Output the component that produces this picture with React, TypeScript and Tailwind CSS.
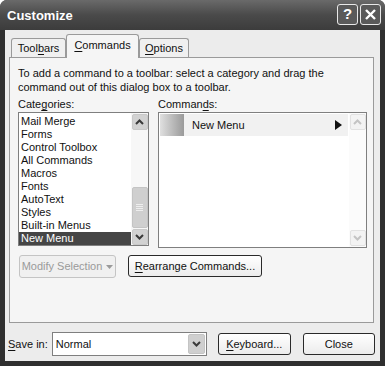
import React from "react";

const font = { fontFamily: '"Liberation Sans", Arial, sans-serif' };

function U({ children }: { children: React.ReactNode }) {
  return <span className="underline underline-offset-[2px]">{children}</span>;
}

function ArrowBtn({ dir, disabled }: { dir: "up" | "down"; disabled?: boolean }) {
  return (
    <div
      className={`w-[16px] h-[16px] rounded-[2px] border flex items-center justify-center ${
        disabled ? "border-[#e2e2e2] bg-[#f3f3f3]" : "border-[#c9c9c9] bg-[#d2d2d2]"
      }`}
    >
      <svg width="9" height="6" viewBox="0 0 9 6">
        <path
          d={dir === "up" ? "M1 5 L4.5 1.5 L8 5" : "M1 1 L4.5 4.5 L8 1"}
          fill="none"
          stroke={disabled ? "#c4c4c4" : "#3a3a3a"}
          strokeWidth="2"
        />
      </svg>
    </div>
  );
}

const categories = [
  "Mail Merge",
  "Forms",
  "Control Toolbox",
  "All Commands",
  "Macros",
  "Fonts",
  "AutoText",
  "Styles",
  "Built-in Menus",
  "New Menu",
];

export default function App() {
  return (
    <div
      className="w-[385px] h-[366px] bg-[#2f2f2f] rounded-t-[7px] flex flex-col text-[11px] text-[#111]"
      style={font}
    >
      {/* title bar */}
      <div className="h-[30px] shrink-0 flex items-center justify-between pl-[7px] pr-[4px] rounded-t-[7px] bg-gradient-to-b from-[#6a6a6a] via-[#4a4a4a] to-[#3c3c3c]">
        <span className="text-white font-bold text-[13px] mt-[2px]">Customize</span>
        <div className="flex gap-[2px] mt-[-1px]">
          <div className="w-[21px] h-[21px] rounded-[3px] border border-[#e8e8e8] bg-[#5a5a5a] flex items-center justify-center text-white font-bold text-[15px]">
            ?
          </div>
          <div className="w-[21px] h-[21px] rounded-[3px] border border-[#e8e8e8] bg-[#5a5a5a] flex items-center justify-center">
            <svg width="13" height="13" viewBox="0 0 13 13">
              <path d="M2 2 L11 11 M11 2 L2 11" stroke="#fff" strokeWidth="2.4" />
            </svg>
          </div>
        </div>
      </div>

      {/* body */}
      <div className="flex-1 mx-[5px] mb-[5px] bg-[#ececec] flex flex-col pl-[4px] pr-[6px] pt-[4px]">
        {/* tabs */}
        <div className="flex items-end h-[23px] pl-[2px] relative z-10">
          <div className="h-[19px] w-[55px] border border-b-0 border-[#9a9a9a] rounded-t-[3px] bg-[#f0f0f0] flex items-center justify-center">
            Tool<U>b</U>ars
          </div>
          <div className="h-[24px] w-[73px] mb-[-1px] border border-b-0 border-[#9a9a9a] rounded-t-[3px] bg-[#f5f5f5] flex items-center justify-center pb-[2px]">
            <U>C</U>ommands
          </div>
          <div className="h-[19px] w-[50px] border border-b-0 border-[#9a9a9a] rounded-t-[3px] bg-[#f0f0f0] flex items-center justify-center">
            <U>O</U>ptions
          </div>
        </div>

        {/* panel */}
        <div className="h-[266px] border border-[#9a9a9a] bg-[#f5f5f5] pl-[8px] pr-[6px] pt-[8px]">
          <p className="leading-[14px]">
            To add a command to a toolbar: select a category and drag the
            <br />
            command out of this dialog box to a toolbar.
          </p>

          <div className="flex gap-[9px] mt-[2px]">
            {/* categories */}
            <div className="w-[131px] flex flex-col">
              <div className="h-[16px] leading-[16px]">
                Cate<U>g</U>ories:
              </div>
              <div className="h-[134px] border border-[#7f7f7f] bg-white flex">
                <div className="flex-1 flex flex-col pt-[2px]">
                  {categories.map((c, i) => (
                    <div
                      key={c}
                      className={`h-[13px] leading-[13px] pl-[2px] ${
                        i === categories.length - 1 ? "bg-[#454545] text-white" : ""
                      }`}
                    >
                      {c}
                    </div>
                  ))}
                </div>
                <div className="w-[17px] flex flex-col bg-[#f7f7f7] p-[0.5px]">
                  <ArrowBtn dir="up" />
                  <div className="flex-1 flex flex-col justify-end pb-[1px]">
                    <div className="h-[41px] rounded-[2px] border border-[#c4c4c4] bg-[#cfcfcf] flex flex-col items-center justify-center gap-[1px]">
                      <div className="w-[7px] h-[1px] bg-[#eee]" />
                      <div className="w-[7px] h-[1px] bg-[#eee]" />
                      <div className="w-[7px] h-[1px] bg-[#eee]" />
                      <div className="w-[7px] h-[1px] bg-[#eee]" />
                    </div>
                  </div>
                  <ArrowBtn dir="down" />
                </div>
              </div>
            </div>

            {/* commands */}
            <div className="w-[209px] flex flex-col">
              <div className="h-[16px] leading-[16px]">
                Comman<U>d</U>s:
              </div>
              <div className="h-[136px] border border-[#7f7f7f] bg-white flex">
                <div className="flex-1 p-[1px]">
                  <div className="h-[22px] flex items-center bg-[#f1f1f1]">
                    <div className="w-[24px] h-full bg-gradient-to-r from-[#e0e0e0] to-[#9a9a9a]" />
                    <span className="ml-[8px] flex-1">New Menu</span>
                    <svg width="7" height="10" viewBox="0 0 7 10" className="mr-[6px]">
                      <path d="M0 0 L7 5 L0 10 Z" fill="#111" />
                    </svg>
                  </div>
                </div>
                <div className="w-[17px] flex flex-col justify-between bg-[#fbfbfb] p-[0.5px] pb-[1px]">
                  <ArrowBtn dir="up" disabled />
                  <ArrowBtn dir="down" disabled />
                </div>
              </div>
            </div>
          </div>

          {/* panel buttons */}
          <div className="flex gap-[12px] mt-[7px]">
            <div className="w-[97px] h-[23px] ml-[1px] border border-[#c4c4c4] rounded-[3px] bg-[#f0f0f0] text-[#9a9a9a] flex items-center justify-center gap-[4px]">
              Modify Selection
              <svg width="7" height="4" viewBox="0 0 7 4">
                <path d="M0 0 L7 0 L3.5 4 Z" fill="#9a9a9a" />
              </svg>
            </div>
            <div className="w-[134px] h-[22px] border border-[#2a2a2a] rounded-[3px] bg-gradient-to-b from-white to-[#ececec] flex items-center justify-center">
              <U>R</U>earrange Commands...
            </div>
          </div>
        </div>

        {/* bottom row */}
        <div className="flex items-center mt-[9px] h-[24px]">
          <span className="ml-[-1px] whitespace-nowrap shrink-0">
            <U>S</U>ave in:
          </span>
          <div className="ml-[4px] shrink-0 w-[155px] h-[24px] border border-[#7f7f7f] bg-white flex items-center pl-[3px] pr-[1px]">
            <span className="flex-1">Normal</span>
            <div className="w-[17px] h-[20px] rounded-[2px] border border-[#c4c4c4] bg-[#cfcfcf] flex items-center justify-center">
              <svg width="9" height="6" viewBox="0 0 9 6">
                <path d="M1 1 L4.5 4.5 L8 1" fill="none" stroke="#3a3a3a" strokeWidth="2" />
              </svg>
            </div>
          </div>
          <div className="ml-[11px] shrink-0 w-[73px] h-[22px] border border-[#2a2a2a] rounded-[3px] bg-gradient-to-b from-white to-[#ececec] flex items-center justify-center">
            <U>K</U>eyboard...
          </div>
          <div className="ml-[12px] shrink-0 w-[72px] h-[22px] border border-[#2a2a2a] rounded-[3px] bg-gradient-to-b from-white to-[#ececec] flex items-center justify-center">
            Close
          </div>
        </div>
      </div>
    </div>
  );
}
